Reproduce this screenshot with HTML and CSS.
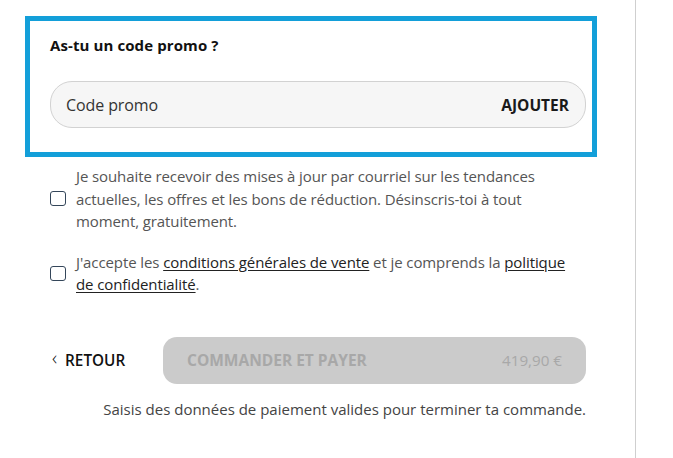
FILE: index.html
```html
<!DOCTYPE html>
<html lang="fr">
<head>
<meta charset="utf-8">
<link rel="stylesheet" href="styles.css">
</head>
<body>
<div class="page">
  <main class="col">
    <section class="promo">
      <h2 class="promo-title">As-tu un code promo ?</h2>
      <div class="promo-field">
        <span class="placeholder">Code promo</span>
        <span class="add">AJOUTER</span>
      </div>
    </section>

    <div class="body">
      <label class="check">
        <span class="box"></span>
        <span class="check-text">Je souhaite recevoir des mises à jour par courriel sur les tendances actuelles, les offres et les bons de réduction. Désinscris-toi à tout moment, gratuitement.</span>
      </label>

      <label class="check check-2">
        <span class="box"></span>
        <span class="check-text">J'accepte les <a href="#">conditions générales de vente</a> et je comprends la <a href="#">politique de confidentialité</a>.</span>
      </label>

      <div class="actions">
        <a class="back" href="#"><span class="chev">‹</span>RETOUR</a>
        <div class="pay">
          <span class="pay-label">COMMANDER ET PAYER</span>
          <span class="pay-price">419,90 €</span>
        </div>
      </div>
      <p class="hint">Saisis des données de paiement valides pour terminer ta commande.</p>
    </div>
  </main>
  <aside class="side"></aside>
</div>
</body>
</html>
```

FILE: styles.css
```css
* { box-sizing: border-box; }
html, body { margin: 0; padding: 0; background: #fff; }
body {
  font-family: "Open Sans", "Noto Sans", Arial, sans-serif;
  color: #222;
  font-size: 14px;
}
.page { display: flex; height: 458px; }
.col {
  width: 636px;
  border-right: 1px solid #cfcfcf;
  padding: 16px 38px 0 25px;
}
.promo {
  border: 5px solid #139fd9;
  padding: 14px 6px 24px 20px;
}
.promo-title {
  margin: 0;
  font-size: 15px;
  line-height: 20px;
  font-weight: 700;
  color: #111;
  letter-spacing: 0.1px;
}
.promo-field {
  margin-top: 26px;
  height: 47px;
  border: 1px solid #d2d2d2;
  border-radius: 22px;
  background: #f6f6f6;
  display: flex;
  align-items: center;
  justify-content: space-between;
  padding: 0 16px 0 15px;
}
.placeholder { font-size: 16px; color: #333; letter-spacing: -0.1px; }
.add { font-size: 15.5px; font-weight: 700; color: #1a1a1a; }

.body { margin-right: 11px; }
.check {
  display: flex;
  align-items: center;
  margin-top: 8px;
  padding-left: 25px;
}
.check-2 { margin-top: 18px; }
.box {
  flex: none;
  width: 16px;
  height: 15px;
  border: 1.5px solid #34465a;
  border-radius: 3px;
  margin-right: 10px;
}
.check-text {
  font-size: 15px;
  line-height: 22.5px;
  color: #555;
  letter-spacing: -0.1px;
}
.check-text a { color: #222; text-decoration: underline; text-underline-offset: 2px; }

.actions {
  display: flex;
  align-items: center;
  margin-top: 41px;
  padding-left: 27px;
}
.back {
  display: flex;
  align-items: center;
  width: 111px;
  font-size: 15.3px;
  font-weight: 600;
  color: #111;
  text-decoration: none;
}
.chev { font-size: 20px; font-weight: 300; margin-right: 8px; line-height: 1; position: relative; top: -2px; }
.pay {
  flex: 1;
  height: 47px;
  border-radius: 14px;
  background: #cbcbcb;
  display: flex;
  align-items: center;
  justify-content: space-between;
  padding: 0 24px;
}
.pay-label { font-size: 15.5px; font-weight: 700; color: #a8a8a8; }
.pay-price { font-size: 15.2px; color: #a8a8a8; }
.hint {
  margin: 15px 0 0;
  text-align: right;
  font-size: 15px;
  line-height: 20px;
  color: #444;
}
.side { flex: 1; }
```
